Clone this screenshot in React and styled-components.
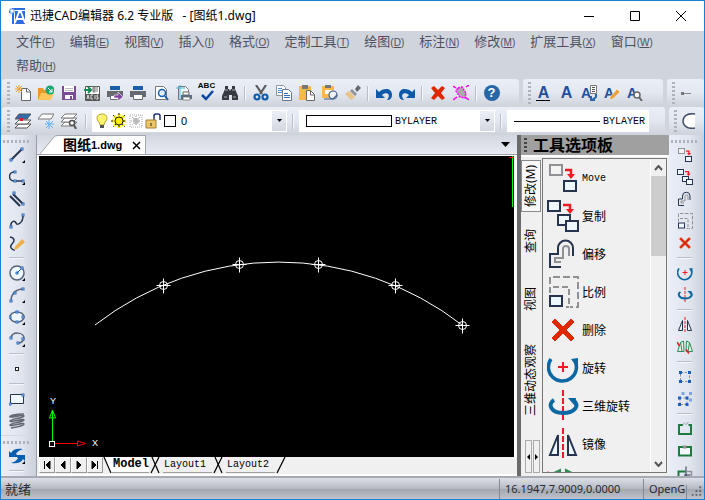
import styled, { createGlobalStyle } from 'styled-components';

const NAVY = '#26344f';
const BLUE = '#0b5cab';
const GRAY = '#8f9194';

/* modify icons, 32 x 32: used by the palette and, at half size, by the right toolbar */
const modifyIcons = {
  move: (
    <>
      <rect x="3" y="3" width="12" height="10" fill="#f4f4f4" stroke={GRAY} strokeWidth="2" />
      <path d="M18 8h6v5" fill="none" stroke="#ed1c24" strokeWidth="2.5" />
      <path d="M20 12h8l-4 5z" fill="#ed1c24" />
      <rect x="17" y="19" width="12" height="10" fill="#eef7ff" stroke={NAVY} strokeWidth="2" />
    </>
  ),
  copy: (
    <>
      <rect x="1" y="1" width="12" height="10" fill="#eef7ff" stroke={NAVY} strokeWidth="2" />
      <path d="M16 5h7v5" fill="none" stroke="#ed1c24" strokeWidth="2.5" />
      <path d="M19 9h8l-4 5z" fill="#ed1c24" />
      <rect x="11" y="15" width="12" height="10" fill="#eef7ff" stroke={NAVY} strokeWidth="2" />
      <rect x="19" y="21" width="12" height="10" fill="#eef7ff" stroke={NAVY} strokeWidth="2" />
    </>
  ),
  offset: (
    <>
      <path d="M14 29H3V16h8v-6a7.500 7.500 0 0 1 15 0v8" fill="none" stroke={NAVY} strokeWidth="2" />
      <path d="M14 24H8v-4h8v-9a3 3 0 0 1 6 0v7" fill="none" stroke={GRAY} strokeWidth="2" />
    </>
  ),
  scale: (
    <>
      <path d="M3 8V1h28v30h-8" fill="none" stroke={GRAY} strokeWidth="2" strokeDasharray="7 3" />
      <path d="M3 17v-6h19v20h-3" fill="none" stroke={GRAY} strokeWidth="2" strokeDasharray="6 3" />
      <rect x="3" y="20" width="12" height="10" fill="#eef7ff" stroke={NAVY} strokeWidth="2" />
    </>
  ),
  remove: <path d="M5 8l3-3 8 8 8-8 3 3-8 8 8 8-3 3-8-8-8 8-3-3 8-8z" fill="#dd2800" stroke="#dd2800" />,
  rotate: (
    <>
      <path d="M4 7a14 14 0 1 0 24 2" fill="none" stroke="#0b68a3" strokeWidth="3.500" />
      <path d="M24 7l7-1v8l-4-3z" fill="#0b68a3" />
      <path d="M11 15h10M16 10v10" stroke="#ed1c24" strokeWidth="2" />
    </>
  ),
  rotate3d: (
    <>
      <path d="M16 0v30" stroke="#ed1c24" strokeWidth="2" strokeDasharray="6 2" />
      <path d="M7 10c-7 4-3 13 9 13s17-8 11-12" fill="none" stroke="#0b68a3" strokeWidth="4" />
      <path d="M21 8h8l-1 8z" fill="#0b68a3" />
    </>
  ),
  mirror: (
    <>
      <path d="M16 0v32" stroke="#ed1c24" strokeWidth="2" strokeDasharray="6 2" />
      <path d="M11 7v20H3zM21 7v20h8z" fill="#eef7ff" stroke={NAVY} strokeWidth="2" />
    </>
  ),
  mirror3d: (
    <>
      <path d="M1 25L7 7l6-3 1 21zM31 25L25 7l-6-3-1 21zM7 7l3 18M25 7l-3 18" fill="#e4f6ea" stroke="#2f8a57" strokeWidth="2" />
      <path d="M0 6l5 8M18 21l6 8" stroke="#ed1c24" strokeWidth="3" />
    </>
  ),
  group: (
    <>
      <rect x="7" y="7" width="18" height="18" fill="none" stroke={GRAY} strokeWidth="2" strokeDasharray="5 3" />
      <path d="M4 4h6v6H4zM22 4h6v6h-6zM4 22h6v6H4zM22 22h6v6h-6z" fill="#1a5fc0" />
    </>
  ),
  ungroup: (
    <>
      <path d="M9 2h6v6H9zM24 2h6v6h-6zM24 15h6v6h-6z" fill="#7fa6dc" />
      <path d="M6 14h14v13H6z" fill="none" stroke={GRAY} strokeWidth="2" strokeDasharray="4 3" />
      <path d="M2 11h6v6H2zM17 11h6v6h-6zM2 24h6v6H2zM17 24h6v6h-6z" fill="#1a5fc0" />
    </>
  ),
  breakTop: (
    <>
      <path d="M12 8H4v18h24V8h-5" fill="none" stroke="#1e7a3e" strokeWidth="4" />
      <path d="M11 8l5-5M17 8l6-6" stroke={GRAY} strokeWidth="2" />
    </>
  ),
  breakPoint: (
    <>
      <rect x="4" y="8" width="24" height="17" fill="#f5f8fb" stroke="#1e7a3e" strokeWidth="4" />
      <rect x="12" y="5" width="7" height="6" fill={GRAY} />
    </>
  ),
  trim: (
    <>
      <path d="M3 30V13h14" fill="none" stroke="#1e7a3e" strokeWidth="4" />
      <path d="M20 13h9v17" fill="none" stroke={GRAY} strokeWidth="3" />
      <path d="M18 3v26M14 20h13" stroke={NAVY} strokeWidth="2" />
    </>
  ),
};

const node = (x, y) => (
  <rect key={`${x}-${y}`} x={x} y={y} width="2" height="2" fill="#fff" stroke="#2865b8" strokeWidth="1" />
);
const corner = <path d="M16 13v3h-3z" fill="#000" />;

/* small icons, 16 x 16 */
const smallIcons = {
  newFile: (
    <>
      <path d="M6.500 3.500h6l3 3v9h-9z" fill="#fff" stroke="#666" />
      <path d="M11.500 3v4h4" fill="none" stroke="#666" />
      <path d="M4 0v8M0 4h8M1 1l6 6M7 1L1 7" stroke="#f0a32c" />
    </>
  ),
  open: (
    <>
      <path d="M0 3h5l1 2h3v10H0z" fill="#e59a2a" />
      <path d="M3 8h13l-3 7H0z" fill="#ffc559" />
      <circle cx="12" cy="5" r="4.500" fill="#1ea672" />
      <path d="M10 3l4 4M14 4v3h-3" fill="none" stroke="#fff" />
    </>
  ),
  save: (
    <>
      <path d="M1 1h14v14H1z" fill="#7b4b94" />
      <path d="M3 1h10v6H3zM4 10h8v4H4z" fill="#fff" />
      <path d="M4 3.500h8M4 5.500h8" stroke="#bbb" />
      <path d="M9 11h2v3H9z" fill="#7b4b94" />
    </>
  ),
  acis: (
    <>
      <path d="M1.500 1.500h14v14h-14z" fill="#fff" stroke="#555" />
      <path d="M1 9h14v6H1z" fill="#555" />
      <path d="M8 2h6M8 4h6M8 6h6M10 2v6" stroke="#777" />
      <path d="M0 5h6M4 2l3 3-3 3" fill="none" stroke="#168a50" strokeWidth="2" />
      <path d="M3 14l1-4 1 4M9 10H7v4h2M11 10v4M14 10h-1v2h1v2h-2" fill="none" stroke="#fff" strokeWidth=".8" />
    </>
  ),
  printPurple: (
    <>
      <path d="M3 1h10v4H3z" fill="#1760a9" />
      <path d="M0 6h16v6H0z" fill="#66696e" />
      <path d="M3.500 10.500h8v4h-8z" fill="#fff" stroke="#66696e" />
      <path d="M7 10h4V7l5 5-5 4v-3H7z" fill="#8045a0" stroke="#fff" strokeWidth=".6" />
    </>
  ),
  print: (
    <>
      <path d="M3 1h10v4H3z" fill="#1760a9" />
      <path d="M0 6h16v6H0z" fill="#66696e" />
      <path d="M3.500 9.500h9v5h-9z" fill="#fff" stroke="#66696e" />
    </>
  ),
  preview: (
    <>
      <path d="M2.500 1.500h8l3 3v10h-11z" fill="#fff" stroke="#777" />
      <circle cx="9" cy="8" r="3.500" fill="#e2f0ff" stroke="#1760a9" strokeWidth="1.500" />
      <path d="M12 11l3 4" stroke="#1760a9" strokeWidth="2" />
    </>
  ),
  plot: (
    <>
      <path d="M2.500 1.500h7l3 3v10h-10z" fill="#eff8fc" stroke="#777" />
      <path d="M4 0v15M0 3h9" stroke="#49b5d8" />
      <path d="M7 7h6v3H7z" fill="#fff" stroke="#666" />
      <path d="M5 10h11v4H5z" fill="#5c7085" />
      <path d="M7 12h7v3H7z" fill="#fff" stroke="#666" strokeWidth=".7" />
    </>
  ),
  check: <path d="M3 10l4 4 7-8" fill="none" stroke="#0d47a1" strokeWidth="2.500" />,
  find: (
    <>
      <path d="M3 1h3v3h1l1 2 1-2h1V1h3v3l3 7v4h-6v-5H7v5H0v-4l3-7z" fill="#373a40" />
      <path d="M2 12h3M11 12h3M3 5h3M10 5h3" stroke="#aaa" />
    </>
  ),
  cut: (
    <>
      <path d="M3 0l6 9M13 0L7 9" stroke="#5a5c60" strokeWidth="2.200" />
      <circle cx="4" cy="12" r="2.500" fill="none" stroke={BLUE} strokeWidth="2.200" />
      <circle cx="12" cy="12" r="2.500" fill="none" stroke={BLUE} strokeWidth="2.200" />
    </>
  ),
  copyDoc: (
    <>
      <path d="M.5.5h7l2 2v8h-9z" fill="#fff" stroke="#8a98a8" />
      <path d="M2 3.500h4M2 5.500h4M2 7.500h4" stroke="#4b8bcf" />
      <path d="M6.500 4.500h6l3 3v8h-9z" fill="#fff" stroke="#6a7888" />
      <path d="M8 8.500h4M8 10.500h6M8 12.500h6" stroke="#2f72c0" />
    </>
  ),
  paste: (
    <>
      <path d="M0 1h12v14H0z" fill="#f9b84c" />
      <path d="M3 0h6v4H3z" fill="#777" />
      <path d="M7.500 5.500h4l4 4v6h-8z" fill="#fff" stroke="#666" />
      <path d="M11.500 6v4h4" fill="none" stroke="#666" />
    </>
  ),
  pasteBlock: (
    <>
      <path d="M0 1h12v12H0z" fill="#f9b84c" />
      <path d="M3 0h6v3H3z" fill="#777" />
      <path d="M3 5h7v4H3z" fill="#fff" />
      <circle cx="11" cy="10" r="4" fill="#eef4fb" stroke="#44618c" strokeWidth="1.200" />
      <path d="M2 14h9l4-4" fill="none" stroke="#44618c" strokeWidth="1.200" />
    </>
  ),
  brush: (
    <>
      <path d="M10 4l3-4 3 3-4 4z" fill="#66696e" />
      <path d="M7 4l5 5-2 2-5-5z" fill="#909398" />
      <path d="M4 6l6 6-4 3-6-6z" fill="#e9c489" />
    </>
  ),
  undo: <path d="M0 4l3 3c4-4 13-5 13 3 0 3-2 5-5 5 5-6-1-9-5-5l3 3H0z" fill="#0e5aa9" />,
  redo: <path d="M16 4l-3 3C9 3 0 2 0 10c0 3 2 5 5 5-5-6 1-9 5-5l-3 3h9z" fill="#0e5aa9" />,
  del: <path d="M1 3l3-2 4 4 4-4 3 2-4 5 4 5-3 2-4-4-4 4-3-2 4-5z" fill="#dd2800" />,
  purge: (
    <>
      <path d="M0 1l3 2M13 2l3-2M0 15l4-3M12 12l4 3" stroke="#f0f" strokeWidth="1.500" />
      <path d="M5 3l4-1 4 6-1 5-5-1-4-6z" fill="#aaa" stroke="#f0f" strokeWidth="1.500" strokeDasharray="2 1" />
    </>
  ),
  textLine: <path d="M1 15.500h14" stroke="#000" />,
  textCopy: (
    <>
      <path d="M9.500.5h6v8h-6z" fill="#fff" stroke="#777" />
      <path d="M11 2.500h3M11 4.500h3M11 6.500h3" stroke="#555" />
      <path d="M15 9v3l-4 3M10 11v4h4" fill="none" stroke="#2666ae" strokeWidth="2" />
    </>
  ),
  textEdit: <path d="M6 12v3l3-1 7-7-3-3z" fill="#e8a33d" stroke="#fff" strokeWidth=".5" />,
  textFind: (
    <>
      <circle cx="10" cy="10" r="3" fill="#fff" stroke="#666" strokeWidth="1.500" />
      <path d="M12 12l3 4" stroke="#666" strokeWidth="2" />
    </>
  ),
  dimension: (
    <>
      <path d="M2 8.500h9" stroke="#85888e" />
      <path d="M1 7h3v3H1z" fill="#777" />
    </>
  ),
  layers: (
    <>
      <path d="M4 11h12l-4 4H0z" fill="#fff" stroke="#555" />
      <path d="M4 7h12l-4 4H0z" fill="#fff" stroke="#555" />
      <path d="M4 1h12l-4 5H0z" fill="#2c6fae" stroke="#555" />
      <path d="M5 5h3v3H5z" fill="#e02020" />
    </>
  ),
  layerFreeze: (
    <>
      <path d="M4 1h12l-3 5H0z" fill="#fff" stroke="#777" />
      <path d="M11 7v9M7 11h9M8 8l7 7M15 8l-7 7" stroke="#69b1f4" />
    </>
  ),
  layerFind: (
    <>
      <path d="M4 9h12l-4 4H0z" fill="#fff" stroke="#777" />
      <path d="M4 5h12l-4 4H0z" fill="#fff" stroke="#777" />
      <path d="M4 1h12l-4 4H0z" fill="#fff" stroke="#777" />
      <circle cx="11" cy="10" r="2.500" fill="#fff" stroke="#555" strokeWidth="1.500" />
      <path d="M13 12l2 4" stroke="#555" strokeWidth="2" />
    </>
  ),
  bulb: (
    <>
      <path d="M8 1c-6 0-6 6-3 8l1 3h4l1-3c3-2 3-8-3-8z" fill="#fff36b" stroke="#b5a82b" />
      <path d="M6 12h4v3H6z" fill="#555" />
      <path d="M6 4l1-1" stroke="#fff" strokeWidth="1.500" />
    </>
  ),
  sun: (
    <>
      <path d="M8 1v14M1 8h14M3 3l10 10M13 3L3 13" stroke="#fff200" strokeWidth="3" />
      <path d="M8 0v16M0 8h16M2 2l12 12M14 2L2 14" stroke="#222" strokeDasharray="2 2" />
      <circle cx="8" cy="8" r="4" fill="#ffec00" stroke="#222" />
    </>
  ),
  freezeVp: (
    <>
      <path d="M2 2h12v12H2z" fill="none" stroke="#aaa" strokeDasharray="1 1" />
      <path d="M8 3v10M3 8h10M4 4l8 8M12 4l-8 8" stroke="#999" strokeDasharray="1 1" />
      <circle cx="8" cy="8" r="3" fill="#bbb" />
    </>
  ),
  lock: (
    <>
      <path d="M9 7V3q0-2 2-2h2q2 0 2 2v4" fill="none" stroke="#1c2f80" strokeWidth="1.500" />
      <path d="M1 7h10v8H1z" fill="#ecc566" stroke="#a78034" />
      <path d="M6 10v3" stroke="#222" />
    </>
  ),
  color: <rect x="2.500" y="2.500" width="11" height="11" fill="#fff" stroke="#000" />,
  circleHalf: (
    <>
      <path d="M11 1h2v14h-2z" fill="#fff" />
      <path d="M13 1C-3-2-3 18 13 15" fill="#fff" stroke="#44506b" strokeWidth="1.500" />
    </>
  ),
  line: (
    <>
      <path d="M2 13L13 2" stroke={NAVY} strokeWidth="2" />
      {node(1, 12)}
      {node(12, 1)}
      {corner}
    </>
  ),
  polyline: (
    <>
      <path d="M5 3c-6 0-6 9 0 9h8" fill="none" stroke={NAVY} strokeWidth="1.500" />
      {node(5, 2)}
      {node(5, 11)}
      {node(13, 11)}
      {corner}
    </>
  ),
  multiline: (
    <>
      <path d="M1 5l10 10M4 3l10 10" stroke={NAVY} strokeWidth="2" />
      {node(4, 1)}
      {node(13, 12)}
    </>
  ),
  spline: (
    <>
      <path d="M2 14c-1-6 4-7 5-4s7 0 7-7" fill="none" stroke={NAVY} strokeWidth="1.500" />
      {node(1, 13)}
      {node(13, 1)}
    </>
  ),
  sketch: (
    <>
      <path d="M1 2c5 1 5 4 2 7s0 6 3 6" fill="none" stroke={NAVY} strokeWidth="1.500" />
      <path d="M6 12l7-8 3 3-8 7-3 1z" fill="#f0ad43" />
    </>
  ),
  circle: (
    <>
      <circle cx="8" cy="8" r="7" fill="#eff7ff" stroke="#56647a" strokeWidth="1.500" />
      <path d="M8 8l4-4M6 8h4M8 6v4" stroke="#1f66b7" />
      {node(12, 2)}
      {corner}
    </>
  ),
  arc: (
    <>
      <path d="M2 14C2 7 7 2 14 2" fill="none" stroke="#56647a" strokeWidth="1.500" />
      {node(1, 13)}
      {node(5, 5)}
      {node(13, 1)}
      {corner}
    </>
  ),
  ellipse: (
    <>
      <ellipse cx="8" cy="8" rx="7" ry="5" fill="#eff7ff" stroke="#56647a" strokeWidth="1.500" />
      {node(0, 7)}
      {node(7, 2)}
      {node(13, 7)}
      {node(7, 12)}
      {corner}
    </>
  ),
  ellipseArc: (
    <>
      <path d="M2 7c1-7 13-6 13 0 0 3-3 5-6 5" fill="none" stroke="#56647a" strokeWidth="1.500" />
      {node(1, 6)}
      {node(13, 7)}
      {node(8, 11)}
      {corner}
    </>
  ),
  point: <rect x="6.500" y="6.500" width="3" height="3" fill="#fff" stroke="#222" />,
  rectangle: (
    <>
      <path d="M1.500 3.500h13v9h-13z" fill="#eff7ff" stroke={NAVY} />
      {node(0, 12)}
      {node(13, 3)}
    </>
  ),
  hatch: (
    <path
      d="M15 1C6 1 0 3 1 4s14-3 14-1S1 6 1 8s14-3 14-1S1 10 1 12s14-3 14-1-7 3-13 4"
      fill="none"
      stroke="#626771"
      strokeWidth="1.600"
    />
  ),
  regen: (
    <>
      <path d="M0 3l2 2c2-4 6-5 12-4-4 1-6 3-7 5l3 3H0z" fill="#075eb0" />
      <path d="M16 13l-2-2c-2 4-6 5-12 4 4-1 6-3 7-5L6 7h10z" fill="#075eb0" />
      {corner}
    </>
  ),
};

const Icon = ({ name, size = 16 }) => {
  const big = modifyIcons[name];
  return (
    <svg width={size} height={size} viewBox={big ? '0 0 32 32' : '0 0 16 16'} aria-hidden="true">
      {big || smallIcons[name]}
    </svg>
  );
};

const menus = [
  ['文件', 'F'], ['编辑', 'E'], ['视图', 'V'], ['插入', 'I'], ['格式', 'O'], ['定制工具', 'T'],
  ['绘图', 'D'], ['标注', 'N'], ['修改', 'M'], ['扩展工具', 'X'], ['窗口', 'W'], ['帮助', 'H'],
];

const standardTools = [
  'newFile', 'open', 'save', 'acis', 'printPurple', 'print', 'preview', 'plot', 'check', 'find', '|',
  'cut', 'copyDoc', 'paste', 'pasteBlock', 'brush', '|', 'undo', 'redo', '|', 'del', 'purge', '|', 'help',
];
const textTools = ['textLine', 'text', 'textCopy', 'textEdit', 'textFind'];
const drawTools = [
  'line', 'polyline', 'multiline', 'spline', 'sketch', '|', 'circle', 'arc', 'ellipse', 'ellipseArc', '|',
  'point', '|', 'rectangle', 'hatch',
];
const modifyTools = [
  'move', 'copy', 'offset', 'scale', 'remove', '|', 'rotate', 'rotate3d', '|', 'mirror', 'mirror3d', '|',
  'group', 'ungroup', '|', 'breakTop', 'breakPoint', 'trim',
];
const paletteItems = [
  ['move', 'Move'], ['copy', '复制'], ['offset', '偏移'], ['scale', '比例'],
  ['remove', '删除'], ['rotate', '旋转'], ['rotate3d', '三维旋转'], ['mirror', '镜像'], ['mirror3d', ''],
];
const points = [[124, 129], [200, 108], [279, 108], [356, 129], [423, 169]];

const Tool = ({ name }) => {
  if (name === '|') return <Divider />;
  if (name === 'help') {
    return (
      <ToolButton aria-label="help">
        <HelpMark>?</HelpMark>
      </ToolButton>
    );
  }
  if (name.startsWith('text')) {
    const small = name !== 'textLine' && name !== 'text';
    return (
      <ToolButton aria-label={name}>
        <Letter $small={small}>A</Letter>
        {name !== 'text' && (
          <Overlay>
            <Icon name={name} />
          </Overlay>
        )}
      </ToolButton>
    );
  }
  return (
    <ToolButton aria-label={name}>
      {name === 'check' && <Abc>ABC</Abc>}
      <Icon name={name} />
    </ToolButton>
  );
};

const tools = (names) => names.map((name, index) => <Tool key={index} name={name} />);

const DropArrow = () => (
  <Drop>
    <svg width="7" height="4" viewBox="0 0 7 4" aria-hidden="true">
      <path d="M1 0h5L3.500 3z" fill="#000" />
    </svg>
  </Drop>
);

const Header = () => (
  <>
    <TitleBar>
      <svg width="16" height="16" viewBox="0 0 16 16" aria-hidden="true">
        <path d="M3 0h13v2H5v14H3V5H0V3h3z" fill="#2c6ce0" />
        <path d="M6 3h10v13H6z" fill="#2c6ce0" />
        <path d="M6 15l4-11h2l4 11M8 11h6" fill="none" stroke="#fff" strokeWidth="1.800" />
        <path d="M1 1h4v4H1z" fill="#fff" stroke="#5b93ef" />
      </svg>
      <Title>迅捷CAD编辑器 6.2 专业版 &nbsp;&nbsp;- [图纸1.dwg]</Title>
      <WindowButton aria-label="最小化">
        <svg width="12" height="12" viewBox="0 0 12 12"><path d="M1 6.500h10" stroke="#000" /></svg>
      </WindowButton>
      <WindowButton aria-label="最大化">
        <svg width="12" height="12" viewBox="0 0 12 12"><path d="M1.500 1.500h9v9h-9z" fill="none" stroke="#000" /></svg>
      </WindowButton>
      <WindowButton aria-label="关闭">
        <svg width="12" height="12" viewBox="0 0 12 12"><path d="M1 1l10 10M11 1L1 11" stroke="#000" /></svg>
      </WindowButton>
    </TitleBar>
    <MenuBar>
      {menus.map(([label, key]) => (
        <MenuButton key={key}>
          {label}
          <small>(<u>{key}</u>)</small>
        </MenuButton>
      ))}
    </MenuBar>
    <ToolRow>
      <Toolbar><Grip />{tools(standardTools)}</Toolbar>
      <Toolbar><Grip />{tools(textTools)}</Toolbar>
      <Toolbar $fill><Grip /><Tool name="dimension" /></Toolbar>
    </ToolRow>
    <ToolRow>
      <Toolbar>
        <Grip />
        {tools(['layers', 'layerFreeze', 'layerFind'])}
        <Divider $wide />
        <Combo $width={195}>
          <ComboIcons>
            {['bulb', 'sun', 'freezeVp', 'lock', 'color'].map((name) => <Icon key={name} name={name} />)}
          </ComboIcons>
          <Select aria-label="图层"><option>0</option></Select>
          <DropArrow />
        </Combo>
        <Divider $wide />
        <Combo $width={196} $mono>
          <svg width="87" height="13" aria-hidden="true">
            <rect x=".5" y=".5" width="85" height="11" fill="#fff" stroke="#000" />
          </svg>
          <Select aria-label="颜色"><option>BYLAYER</option></Select>
          <DropArrow />
        </Combo>
        <Divider $wide />
        <Combo $width={142} $mono>
          <svg width="87" height="13" aria-hidden="true"><path d="M0 6.500h86" stroke="#000" /></svg>
          <Select aria-label="线型"><option>BYLAYER</option></Select>
        </Combo>
      </Toolbar>
      <Toolbar $fill><Grip /><Tool name="circleHalf" /></Toolbar>
    </ToolRow>
  </>
);

const Drawing = () => (
  <Canvas viewBox="0 0 475 301" preserveAspectRatio="xMinYMax slice" role="img" aria-label="图纸1">
    <path d="M56 169A299 299 0 0 1 423 169" fill="none" stroke="#fff" />
    {points.map(([x, y]) => (
      <g key={x} fill="none" stroke="#fff" transform={`translate(${x + 0.5} ${y + 0.5})`}>
        <circle r="4" />
        <path d="M-7 0h14M0-7v15" />
      </g>
    ))}
    <path d="M13.500 285v-31" stroke="#0f0" />
    <path d="M13.500 254l-3 8h6z" fill="none" stroke="#0f0" />
    <path d="M16 287.500h30" stroke="#f00" />
    <path d="M38.500 285v5l8-2.500z" fill="#000" stroke="#f00" />
    <rect x="10.500" y="285.500" width="5" height="5" fill="none" stroke="#fff" />
    <text x="11" y="248">Y</text>
    <text x="53" y="290">X</text>
    <path d="M473.500 0v51" stroke="#0f0" />
    <path d="M470 1.500h5" stroke="#f00" />
  </Canvas>
);

const Slash = ({ both }) => (
  <svg width="14" height="17" viewBox="0 0 14 17" aria-hidden="true">
    {both && <path d="M3 0l7 16" stroke="#000" strokeWidth="1.200" />}
    <path d="M10 0L2 16" stroke="#000" strokeWidth="1.200" />
  </svg>
);

const Document = () => (
  <DocumentPane>
    <FileTabs>
      <svg width="18" height="19" viewBox="0 0 18 19" aria-hidden="true">
        <path d="M0 19L14 2q1-1 4-1v18z" fill="#fff" />
        <path d="M0 19L14 2q1-1.500 4-1.500" fill="none" stroke="#a2a6ad" />
      </svg>
      <FileTab>
        图纸<span>1.dwg</span>
        <PlainButton aria-label="关闭图纸">
          <svg width="9" height="9" viewBox="0 0 9 9"><path d="M1 1l7 7M8 1L1 8" stroke="#000" strokeWidth="1.500" /></svg>
        </PlainButton>
      </FileTab>
      <TabMenu aria-label="图纸列表">
        <svg width="9" height="5" viewBox="0 0 9 5"><path d="M0 0h9L4.500 5z" fill="#000" /></svg>
      </TabMenu>
    </FileTabs>
    <CanvasFrame><Drawing /></CanvasFrame>
    <SheetTabs>
      {['M4.500 2v8M10 2v8L6 6z', 'M9 2v8L5 6z', 'M5 2v8l4-4z', 'M4 2v8l4-4zM9.500 2v8'].map((d) => (
        <SheetNav key={d} aria-label="切换布局">
          <svg width="13" height="12" viewBox="0 0 13 12"><path d={d} fill="#000" stroke="#000" /></svg>
        </SheetNav>
      ))}
      <svg width="9" height="17" viewBox="0 0 9 17" aria-hidden="true">
        <path d="M0 0h10v16H7z" fill="#fff" />
        <path d="M1 0l7 16" stroke="#000" strokeWidth="1.200" />
      </svg>
      <SheetTab $active>Model</SheetTab>
      <Slash both />
      <SheetTab>Layout1</SheetTab>
      <Slash both />
      <SheetTab>Layout2</SheetTab>
      <Slash />
    </SheetTabs>
  </DocumentPane>
);

const Palette = () => (
  <PalettePane>
    <PaletteHeader><Grip $dark />工具选项板</PaletteHeader>
    <PaletteBody>
      <SideTabs>
        <SideTab $size={52} $active>修改(M)</SideTab>
        <SideTab $size={58}>查询</SideTab>
        <SideTab $size={58}>视图</SideTab>
        <SideTab $size={104}>三维动态观察</SideTab>
        <SideNav>
          <button aria-label="上一页"><svg width="4" height="6"><path d="M3 0v6L0 3z" /></svg></button>
          <button aria-label="下一页"><svg width="4" height="6"><path d="M0 0v6l3-3z" /></svg></button>
        </SideNav>
      </SideTabs>
      <PaletteList>
        <Items>
          {paletteItems.map(([name, label]) => (
            <PaletteItem key={name} aria-label={label || name} $latin={label === 'Move'}>
              <Icon name={name} size={32} />
              {label}
            </PaletteItem>
          ))}
        </Items>
        <ScrollTrack>
          <svg width="9" height="6" viewBox="0 0 9 6"><path d="M1 5l3.500-4L8 5" /></svg>
          <Thumb />
          <svg width="9" height="6" viewBox="0 0 9 6"><path d="M1 1l3.500 4L8 1" /></svg>
        </ScrollTrack>
      </PaletteList>
    </PaletteBody>
  </PalettePane>
);

const App = () => (
  <>
    <GlobalStyle />
    <Window>
      <Header />
      <Workspace>
        <SideColumn>
          <Grip $across />
          {tools(drawTools)}
          <SideBreak />
          <Grip $across />
          <Tool name="regen" />
          <Divider />
        </SideColumn>
        <Document />
        <Palette />
        <SideColumn>
          <Grip $across />
          {tools(modifyTools)}
        </SideColumn>
      </Workspace>
      <StatusBar>
        <Ready>就绪</Ready>
        <StatusCell $width={144}>16.1947,7.9009,0.0000</StatusCell>
        <StatusCell $width={43}>OpenG</StatusCell>
        <Resize width="18" height="14" viewBox="0 0 18 14" aria-hidden="true">
          <path d="M13 1h2v2h-2zM9 5h2v2H9zM13 5h2v2h-2zM5 9h2v2H5zM9 9h2v2H9zM13 9h2v2h-2z" fill="#63666d" />
        </Resize>
      </StatusBar>
    </Window>
  </>
);

const GlobalStyle = createGlobalStyle`
  * {
    box-sizing: border-box;
  }
  body {
    margin: 0;
    font-family: 'Noto Sans', 'Noto Sans CJK SC', sans-serif;
    font-size: 12px;
    color: #000;
  }
  button,
  select {
    margin: 0;
    padding: 0;
    border: 0;
    background: none;
    font: inherit;
    color: inherit;
  }
  svg {
    display: block;
    flex: none;
  }
`;

const Window = styled.div`
  display: flex;
  flex-direction: column;
  height: 100vh;
  border: 1px solid #1a80d2;
  background: #d0d4dd;
  overflow: hidden;
`;

const TitleBar = styled.header`
  display: flex;
  flex: none;
  align-items: center;
  height: 30px;
  padding-left: 8px;
  background: #fff;
`;

const Title = styled.h1`
  flex: 1;
  margin: 0 0 0 5px;
  font-size: 12px;
  line-height: 16px;
  font-weight: 400;
  white-space: nowrap;
`;

const WindowButton = styled.button`
  display: grid;
  place-items: center;
  width: 46px;
  height: 28px;
`;

const MenuBar = styled.nav`
  display: flex;
  flex: none;
  flex-wrap: wrap;
  gap: 0 15px;
  padding: 0 32px 0 15px;
  height: 48px;
`;

const MenuButton = styled.button`
  height: 24px;
  padding-bottom: 2px;
  font-size: 13px;
  line-height: 20px;
  color: #4b5161;
  white-space: nowrap;

  small {
    font-family: 'Liberation Sans', sans-serif;
    font-size: 10px;
  }
`;

const ToolRow = styled.div`
  display: flex;
  flex: none;
  gap: 4px;
  height: 28px;
  padding-left: 1px;
`;

const Toolbar = styled.div`
  display: flex;
  flex: ${(props) => (props.$fill ? '1 1 0' : 'none')};
  align-items: center;
  min-width: 0;
  padding: 0 ${(props) => (props.$fill ? '0' : '16px')} 0 5px;
  border-radius: 3px;
  background: linear-gradient(#eaeef6, #e3e7ef 50%, #ced2db);
  overflow: hidden;
`;

const Grip = styled.span`
  flex: none;
  width: ${(props) => (props.$across ? '27px' : '3px')};
  height: ${(props) => (props.$across ? '3px' : props.$dark ? '14px' : '22px')};
  margin: ${(props) => (props.$across ? '5px 0 1px' : props.$dark ? '0 6px 0 0' : '0 1px 0 0')};
  background: ${(props) =>
    props.$across
      ? 'repeating-linear-gradient(90deg, #aeb2ba 0 2px, transparent 2px 4px)'
      : `repeating-linear-gradient(${props.$dark ? '#444' : '#aeb2ba'} 0 2px, transparent 2px 4px)`};
`;

const ToolButton = styled.button`
  position: relative;
  display: grid;
  flex: none;
  place-items: center;
  width: 23px;
  height: 22px;
`;

const Divider = styled.span`
  flex: none;
  width: 2px;
  height: 15px;
  margin: 0 ${(props) => (props.$wide ? '5px' : '3px')};
  background: #b9bdc6;
  border-right: 1px solid #f6f7fa;
`;

const HelpMark = styled.span`
  width: 16px;
  height: 16px;
  border-radius: 50%;
  background: #2767a8;
  color: #fff;
  font: bold 13px/16px 'Liberation Sans', sans-serif;
`;

const Letter = styled.span`
  justify-self: ${(props) => (props.$small ? 'start' : 'center')};
  padding-left: ${(props) => (props.$small ? '3px' : '0')};
  font: bold ${(props) => (props.$small ? '14px' : '16px')} / 16px 'Liberation Sans', sans-serif;
  color: #234f9c;
`;

const Overlay = styled.span`
  position: absolute;
  inset: 3px;
`;

const Abc = styled.span`
  position: absolute;
  top: 0;
  font: bold 8px/8px 'Liberation Sans', sans-serif;
`;

const Combo = styled.div`
  display: flex;
  align-items: center;
  width: ${(props) => props.$width}px;
  height: 22px;
  padding-left: ${(props) => (props.$mono ? '7px' : '2px')};
  border-right: 1px solid #fff;
  background: #fff;
  font-family: ${(props) => (props.$mono ? "'Liberation Mono', monospace" : "'Liberation Sans', sans-serif")};
  font-size: ${(props) => (props.$mono ? '10px' : '11px')};
`;

const ComboIcons = styled.span`
  display: flex;
  gap: 1px;
  margin-right: 1px;
`;

const Select = styled.select`
  flex: 1;
  min-width: 0;
  height: 20px;
  padding-left: 2px;
  appearance: none;
`;

const Drop = styled.span`
  display: grid;
  flex: none;
  place-items: center;
  width: 14px;
  height: 20px;
  background: linear-gradient(#eceff6, #d3d7e0);
`;

const Workspace = styled.main`
  display: flex;
  flex: 1;
  min-height: 0;
`;

const SideColumn = styled.aside`
  display: flex;
  flex: none;
  flex-direction: column;
  align-items: center;
  width: 35px;
  padding-right: 4px;
  background: linear-gradient(90deg, #e9eef8, #e0e4ed 60%, #cbd0da);
  overflow: hidden;

  ${Divider} {
    width: 15px;
    height: 2px;
    margin: 3px 0;
    border: 0;
    border-bottom: 1px solid #f6f7fa;
  }
`;

const SideBreak = styled.span`
  flex: none;
  width: 31px;
  height: 4px;
  border-bottom: 1px solid #d5d9e2;
`;

const DocumentPane = styled.section`
  display: flex;
  flex: 1;
  flex-direction: column;
  min-width: 0;
  border-left: 1px solid #9a9ea7;
`;

const FileTabs = styled.div`
  display: flex;
  flex: none;
  align-items: flex-end;
  height: 20px;
  padding-left: 3px;
  border-bottom: 1px solid #9fa3ab;
  background: linear-gradient(#d2d6df, #e8ebf4);
`;

const FileTab = styled.div`
  display: flex;
  align-items: center;
  height: 19px;
  padding: 0 4px 0 5px;
  border-top: 1px solid #a2a6ad;
  border-right: 1px solid #a2a6ad;
  background: #fff;
  font-size: 14px;
  font-weight: 700;
  line-height: 16px;

  span {
    font-family: 'Liberation Sans', sans-serif;
    font-size: 11px;
  }
`;

const PlainButton = styled.button`
  margin-left: 10px;
`;

const TabMenu = styled.button`
  margin: 0 7px 7px auto;
`;

const CanvasFrame = styled.div`
  flex: 1;
  min-height: 0;
  border: solid #fff;
  border-width: 1px 3px 0 2px;
  background: #000;
`;

const Canvas = styled.svg`
  width: 100%;
  height: 100%;

  text {
    fill: #fff;
    font: 9px 'Liberation Sans', sans-serif;
  }
`;

const SheetTabs = styled.div`
  display: flex;
  flex: none;
  height: 19px;
  padding-left: 2px;
  border-bottom: 2px solid #fff;
  background: #f0f0f0;
  font: 10px/16px 'Liberation Mono', monospace;
`;

const SheetNav = styled.button`
  width: 16px;
  height: 16px;
  border: 1px solid #fff;
  border-right: 1px solid #999;
  border-bottom: 1px solid #999;
`;

const SheetTab = styled.button`
  height: 16px;
  padding: 0 ${(props) => (props.$active ? '0' : '6px')} 0 1px;
  border-bottom: 1px solid #a0a0a0;
  background: ${(props) => (props.$active ? '#fff' : 'none')};
  font-size: ${(props) => (props.$active ? '12px' : '10px')};
  font-weight: ${(props) => (props.$active ? 700 : 400)};
  line-height: 15px;
`;

const PalettePane = styled.aside`
  display: flex;
  flex: none;
  flex-direction: column;
  width: 152px;
  border-left: 4px solid #6a6a6a;
  background: #f0f0f0;
`;

const PaletteHeader = styled.h2`
  display: flex;
  flex: none;
  align-items: center;
  height: 20px;
  margin: 0;
  padding-left: 3px;
  background: #a0a0a0;
  font-size: 16px;
  line-height: 20px;
`;

const PaletteBody = styled.div`
  display: flex;
  flex: 1;
  min-height: 0;
  padding: 1px 2px 3px 0;
  border-top: 2px solid #fff;
`;

const SideTabs = styled.div`
  display: flex;
  flex: none;
  flex-direction: column;
  width: 20px;
  padding-top: 2px;
`;

const SideTab = styled.button`
  flex: none;
  width: 20px;
  height: ${(props) => props.$size}px;
  border: ${(props) => (props.$active ? '1px solid #8a8a8a' : '0')};
  background: ${(props) => (props.$active ? '#f8f8f8' : 'none')};
  line-height: 18px;
  writing-mode: vertical-rl;
  text-orientation: sideways;
  transform: rotate(180deg);
`;

const SideNav = styled.div`
  display: flex;
  gap: 1px;
  height: 33px;
  margin: auto 0 0 4px;

  button {
    display: grid;
    place-items: center;
    width: 7px;
    border: 1px solid #aaa;
  }
`;

const PaletteList = styled.div`
  display: flex;
  flex: 1;
  min-width: 0;
  margin-left: 1px;
  border: 1px solid #777;
`;

const Items = styled.div`
  flex: 1;
  min-width: 0;
  overflow: hidden;
`;

const PaletteItem = styled.button`
  display: flex;
  align-items: center;
  gap: 3px;
  width: 100%;
  height: 38px;
  padding-left: 4px;
  font-family: 'Liberation Mono', 'Noto Sans CJK SC', monospace;
  font-size: ${(props) => (props.$latin ? '10px' : '12px')};
`;

const ScrollTrack = styled.div`
  display: flex;
  flex-direction: column;
  align-items: center;
  width: 16px;
  padding: 6px 0 5px;
  border-left: 1px solid #fff;
  background: #f0f0f0;

  path {
    fill: none;
    stroke: #555;
    stroke-width: 2;
  }
`;

const Thumb = styled.span`
  width: 15px;
  height: 80px;
  margin: 5px 0 auto;
  background: #cdcdcd;
`;

const StatusBar = styled.footer`
  display: flex;
  flex: none;
  align-items: center;
  height: 23px;
  border-top: 2px solid #a6aab3;
  background: linear-gradient(#dde0e8, #b5b9c2 50%, #a4a8b1 55%, #bfc2ca);
  color: #262a33;
  font-size: 11px;
`;

const Ready = styled.span`
  flex: 1;
  padding-left: 4px;
  font-size: 13px;
  line-height: 18px;
`;

const StatusCell = styled.span`
  width: ${(props) => props.$width}px;
  height: 20px;
  padding-left: 5px;
  border-left: 1px solid #858991;
  line-height: 20px;
  white-space: nowrap;
  overflow: hidden;
`;

const Resize = styled.svg`
  align-self: flex-end;
  border-left: 1px solid #858991;
`;

export default App;
